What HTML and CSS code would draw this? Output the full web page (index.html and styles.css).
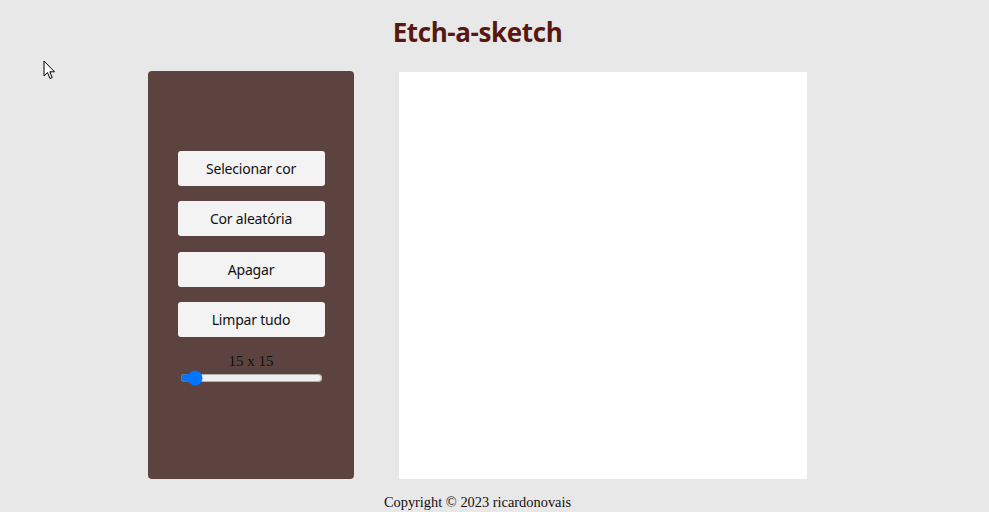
FILE: index.html
```html
<!DOCTYPE html>
<html lang="pt">
<head>
<meta charset="utf-8">
<title>Etch-a-sketch</title>
<link rel="stylesheet" href="styles.css">
</head>
<body>
<div class="page">
  <h1 class="title">Etch-a-sketch</h1>
  <main class="main">
    <section class="panel">
      <button class="btn">Selecionar cor</button>
      <button class="btn">Cor aleatória</button>
      <button class="btn">Apagar</button>
      <button class="btn">Limpar tudo</button>
      <div class="size">
        <label class="size-label" for="size">15 x 15</label>
        <input class="slider" id="size" type="range" min="10" max="160" value="19">
      </div>
    </section>
    <div class="canvas"></div>
  </main>
  <footer class="footer">Copyright © 2023 ricardonovais</footer>
</div>
<svg class="cursor" width="14" height="22" viewBox="0 0 14 22" xmlns="http://www.w3.org/2000/svg">
  <path d="M1 1 L1 16 L4.5 12.5 L7 18.5 L9.2 17.6 L6.8 11.8 L11.5 11.8 Z" fill="#fff" stroke="#000" stroke-width="1" stroke-linejoin="miter"/>
</svg>
</body>
</html>
```
FILE: styles.css
```css
html, body {
  margin: 0;
  padding: 0;
  background: #e8e8e8;
}
.page {
  width: 955px;
  display: flex;
  flex-direction: column;
  align-items: center;
}
.title {
  margin: 14px 0 0;
  height: 57px;
  font-family: "Open Sans", sans-serif;
  font-weight: 700;
  font-size: 26px;
  line-height: 36px;
  letter-spacing: -0.4px;
  color: #581811;
}
.main {
  display: flex;
  gap: 45px;
  align-items: flex-start;
}
.panel {
  width: 206px;
  height: 408px;
  box-sizing: border-box;
  background: #5d433f;
  border-radius: 4px;
  display: flex;
  flex-direction: column;
  align-items: center;
  padding-top: 80px;
  gap: 15.3px;
}
.btn {
  width: 147px;
  height: 35px;
  border: none;
  border-radius: 3px;
  background: #f3f3f3;
  color: #111;
  font-family: "Noto Sans", sans-serif;
  font-size: 14px;
  letter-spacing: -0.2px;
  padding: 0;
}
.size {
  display: flex;
  flex-direction: column;
  align-items: center;
  margin-top: 0;
}
.size-label {
  font-family: "Liberation Serif", serif;
  font-size: 15px;
  line-height: 18px;
  color: #111;
}
.slider {
  width: 143px;
  margin: 0;
  accent-color: #0075ff;
}
.canvas {
  width: 408px;
  height: 407px;
  margin-top: 1px;
  background: #fff;
}
.footer {
  margin-top: 14px;
  font-family: "Liberation Serif", serif;
  font-size: 14.4px;
  line-height: 18px;
  color: #111;
}
.cursor {
  position: absolute;
  left: 43px;
  top: 60px;
}
```
